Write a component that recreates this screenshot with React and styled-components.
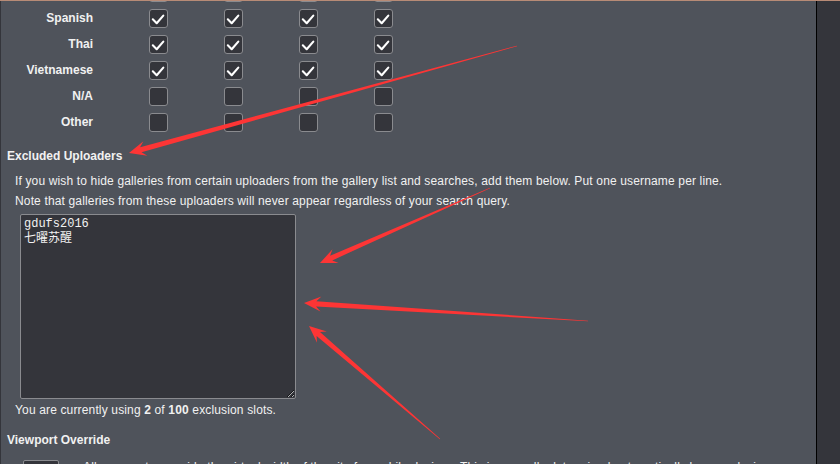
import React from "react";
import styled, { createGlobalStyle } from "styled-components";

const GlobalStyle = createGlobalStyle`
  html, body {
    margin: 0;
    padding: 0;
    background: #34353b;
  }
  body {
    font-family: "Liberation Sans", Arial, sans-serif;
    font-size: 12px;
    color: #f1f1f1;
  }
`;

const LANGS = [
  { name: "Russian", checked: [true, true, true, true] },
  { name: "Spanish", checked: [true, true, true, true] },
  { name: "Thai", checked: [true, true, true, true] },
  { name: "Vietnamese", checked: [true, true, true, true] },
  { name: "N/A", checked: [false, false, false, false] },
  { name: "Other", checked: [false, false, false, false] },
];

// annotation arrows drawn over the screenshot: tail -> tip
const ARROWS = [
  { from: [517, 45], to: [129, 152] },
  { from: [490, 187], to: [320, 262] },
  { from: [588, 320], to: [304, 302] },
  { from: [440, 438], to: [309, 325] },
];

function arrowPoints([x1, y1], [x2, y2]) {
  const tailW = 0.3;
  const neckW = 2.6;
  const headLen = 17;
  const headW = 7.5;
  const dx = x2 - x1;
  const dy = y2 - y1;
  const len = Math.hypot(dx, dy);
  const ux = dx / len;
  const uy = dy / len;
  const nx = -uy;
  const ny = ux;
  const neck = [x2 - ux * headLen * 0.72, y2 - uy * headLen * 0.72];
  const barb = [x2 - ux * headLen, y2 - uy * headLen];
  const pts = [
    [x1 + nx * tailW, y1 + ny * tailW],
    [neck[0] + nx * neckW, neck[1] + ny * neckW],
    [barb[0] + nx * headW, barb[1] + ny * headW],
    [x2, y2],
    [barb[0] - nx * headW, barb[1] - ny * headW],
    [neck[0] - nx * neckW, neck[1] - ny * neckW],
    [x1 - nx * tailW, y1 - ny * tailW],
  ];
  return pts.map((p) => p.map((v) => v.toFixed(1)).join(",")).join(" ");
}

const Frame = styled.div`
  position: relative;
  display: flex;
  height: 464px;
  overflow: hidden;
  border-top: 1px solid #b88b76;
  box-sizing: border-box;
`;

const Main = styled.div`
  width: 817px;
  flex-shrink: 0;
  box-sizing: border-box;
  background: #4f535b;
  border-left: 1px solid #34353b;
  border-right: 1px solid #000;
  overflow: hidden;
`;

const Side = styled.div`
  flex: 1;
  background: #34353b;
`;

const LangTable = styled.div`
  margin-top: -22px;
`;

const LangRow = styled.div`
  display: grid;
  grid-template-columns: 120px repeat(4, 75px);
  align-items: center;
  height: 26px;
`;

const LangLabel = styled.div`
  text-align: right;
  padding-right: 28px;
  font-weight: bold;
`;

const BoxCell = styled.div`
  display: flex;
  justify-content: center;
`;

const CheckBox = styled.span`
  display: flex;
  align-items: center;
  justify-content: center;
  width: 19px;
  height: 19px;
  box-sizing: border-box;
  border: 1px solid #8a8b8f;
  border-radius: 3px;
  background: #34353b;
`;

const Heading = styled.div`
  font-weight: bold;
  line-height: 16px;
  padding-left: 6px;
  margin-top: ${(p) => p.$top}px;
`;

const Para = styled.div`
  padding-left: 14px;
  line-height: 20px;
  letter-spacing: 0.15px;
  margin-top: ${(p) => p.$top || 0}px;
`;

const Uploaders = styled.textarea`
  display: block;
  margin: 3px 0 0 19px;
  width: 276px;
  height: 185px;
  box-sizing: border-box;
  padding: 2px 3px;
  background: #34353b;
  color: #f1f1f1;
  border: 1px solid #8a8b8f;
  border-radius: 2px;
  font-family: "Liberation Mono", "Noto Sans CJK SC", monospace;
  font-size: 12px;
  line-height: 15px;
  resize: both;
  outline: none;
`;

const ViewportRow = styled.div`
  display: flex;
  align-items: flex-start;
  margin-top: 12px;
  padding-left: 22px;
  gap: 24px;
`;

const WidthInput = styled.input`
  width: 36px;
  height: 20px;
  box-sizing: border-box;
  background: #34353b;
  border: 1px solid #8a8b8f;
  border-radius: 2px;
  flex-shrink: 0;
`;

const ViewportText = styled.div`
  line-height: 20px;
  letter-spacing: 0.15px;
  margin-top: -3px;
  padding-right: 12px;
`;

const Overlay = styled.svg`
  position: absolute;
  left: 0;
  top: 0;
  pointer-events: none;
`;

const Check = () => (
  <svg width="17" height="17" viewBox="0 0 17 17">
    <path
      d="M2.8 9.3 L6.7 13.2 L13.3 5.6"
      fill="none"
      stroke="#fff"
      strokeWidth="2.1"
      strokeLinecap="round"
      strokeLinejoin="round"
    />
  </svg>
);

export default function App() {
  return (
    <>
      <GlobalStyle />
      <Frame>
        <Main>
          <LangTable>
            {LANGS.map((lang) => (
              <LangRow key={lang.name}>
                <LangLabel>{lang.name}</LangLabel>
                {lang.checked.map((on, i) => (
                  <BoxCell key={i}>
                    <CheckBox>{on && <Check />}</CheckBox>
                  </BoxCell>
                ))}
              </LangRow>
            ))}
          </LangTable>

          <Heading $top={13}>Excluded Uploaders</Heading>
          <Para $top={7}>
            If you wish to hide galleries from certain uploaders from the gallery list and searches, add them below. Put one username per line.
            <br />
            Note that galleries from these uploaders will never appear regardless of your search query.
          </Para>
          <Uploaders defaultValue={"gdufs2016\n七曜苏醒"} spellCheck={false} />
          <Para $top={1}>
            You are currently using <b>2</b> of <b>100</b> exclusion slots.
          </Para>

          <Heading $top={12}>Viewport Override</Heading>
          <ViewportRow>
            <WidthInput type="text" />
            <ViewportText>
              Allows you to override the virtual width of the site for mobile devices. This is normally determined automatically by your device based on its DPI. Sensible values at 100% zoom are between 640 and 1400.
            </ViewportText>
          </ViewportRow>
        </Main>
        <Side />
        <Overlay width="840" height="464" viewBox="0 0 840 464">
          {ARROWS.map((a, i) => (
            <polygon key={i} points={arrowPoints(a.from, a.to)} fill="#fd3535" />
          ))}
        </Overlay>
      </Frame>
    </>
  );
}
